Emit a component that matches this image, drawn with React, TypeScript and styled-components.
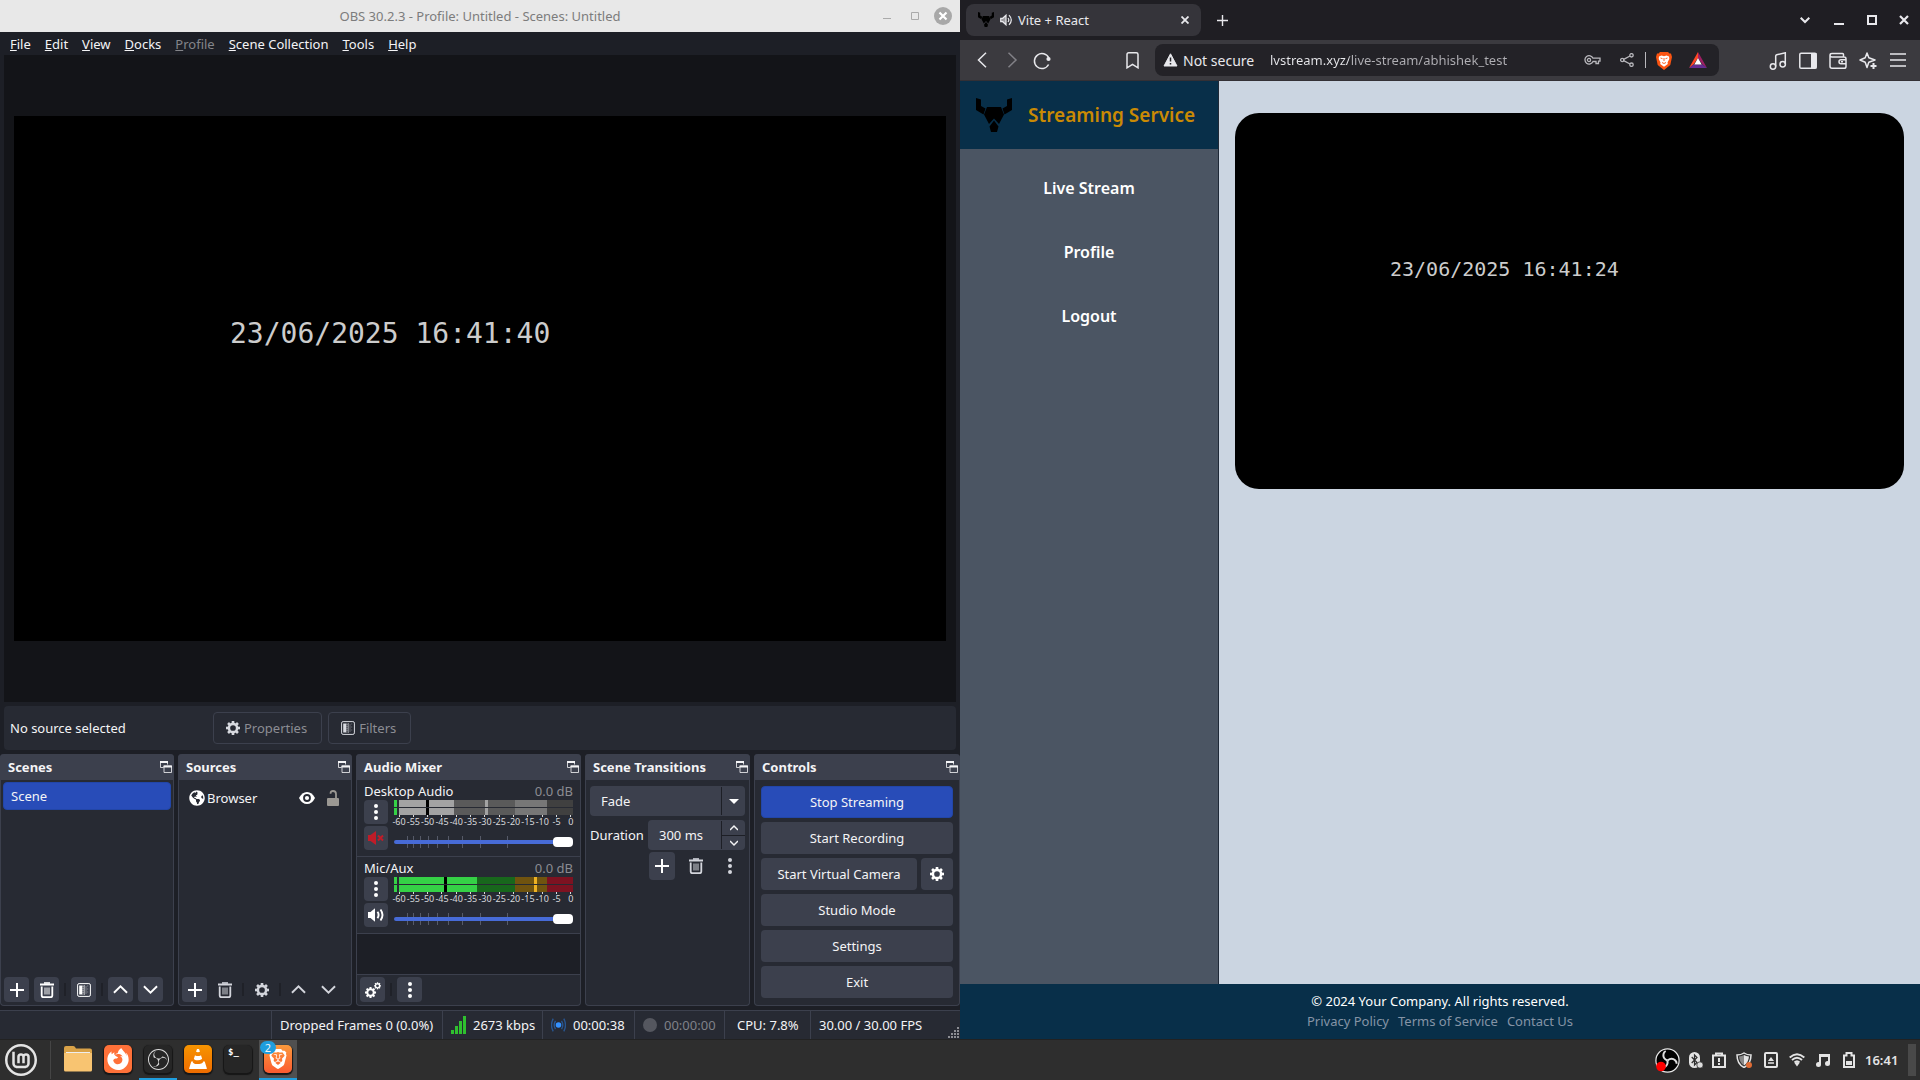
import React from 'react';
import styled, { createGlobalStyle, css } from 'styled-components';
import { SiBrave, SiFirefoxbrowser, SiLinuxmint, SiObsstudio, SiVlcmediaplayer } from 'react-icons/si';
import { FaGlobeAmericas } from 'react-icons/fa';

const ui = '"Noto Sans", "DejaVu Sans", sans-serif';
const mono = '"DejaVu Sans Mono", monospace';

const c = {
  base: '#1d1f26',
  panel: '#272a33',
  raised: '#3c404d',
  accent: '#284cb8',
  sea: '#082f49',
  text: '#f4f4f6',
};

const GlobalStyle = createGlobalStyle`
  *, *::before, *::after { box-sizing: border-box; }
  body { margin: 0; background: #1b1c20; font-family: ${ui}; font-size: 13px; color: ${c.text}; }
  button, input, select { font: inherit; color: inherit; border: 0; margin: 0; padding: 0; background: none; }
  button { cursor: pointer; }
  svg { display: block; flex: none; }
  ul, h1, h2, p { margin: 0; padding: 0; list-style: none; }
`;

const Desktop = styled.div`
  min-height: 100vh;
  display: grid;
  grid-template-columns: 1fr 1fr;
  grid-template-rows: 1fr 41px;
`;

/* ---------- OBS window ---------- */

const ObsWindow = styled.section`
  display: flex;
  flex-direction: column;
  background: ${c.base};
  min-width: 0;
`;

const TitleBar = styled.header`
  display: grid;
  grid-template-columns: 1fr auto 1fr;
  align-items: center;
  height: 32px;
  background: #e8e8e8;
  color: #7c7c7c;
`;

const WindowTitle = styled.h1`
  grid-column: 2;
  font-size: 13px;
  font-weight: 400;
`;

const TitleButtons = styled.div`
  display: flex;
  justify-content: flex-end;
  align-items: center;
  gap: 10px;
  padding-right: 8px;
`;

const TitleButton = styled.button`
  width: 18px;
  height: 18px;
`;

const MenuBar = styled.nav`
  display: flex;
  align-items: center;
  gap: 14px;
  height: 23px;
  padding: 0 10px;
`;

const MenuItem = styled.button`
  line-height: 18px;
  &:disabled { color: #84858a; }
  &::first-letter { text-decoration: underline; }
`;

const Preview = styled.div`
  flex: 1;
  display: flex;
  align-items: center;
  margin: 0 4px;
  padding: 0 10px;
  background: #131418;
`;

const PreviewCanvas = styled.div`
  flex: 1;
  aspect-ratio: 16 / 9;
  padding: 202px 0 0 216px;
  background: #000;
  color: #ccc;
  font: 28px/32px ${mono};
`;

const SourceBar = styled.div`
  display: flex;
  align-items: center;
  gap: 6px;
  height: 44px;
  margin: 4px;
  padding: 0 6px;
  background: ${c.panel};
  border-radius: 4px;
`;

const SourceName = styled.p`
  width: 197px;
`;

const OutlineButton = styled.button`
  display: flex;
  align-items: center;
  gap: 4px;
  height: 32px;
  padding: 0 14px 0 12px;
  border: 1px solid ${c.raised};
  border-radius: 4px;
  color: #8c8d93;
  svg { color: #d8dae0; }
`;

const Docks = styled.div`
  display: grid;
  grid-template-columns: 174fr 174fr 225fr 165fr 206fr;
  gap: 4px;
  height: 252px;
`;

const DockBox = styled.section`
  display: flex;
  flex-direction: column;
  min-width: 0;
  background: ${c.panel};
  border: 1px solid ${c.raised};
  border-top: 0;
  border-radius: 4px;
`;

const DockHead = styled.header`
  display: flex;
  justify-content: space-between;
  align-items: center;
  height: 26px;
  margin: 0 -1px;
  padding: 0 2px 0 8px;
  background: ${c.raised};
  border-radius: 4px 4px 0 0;
  h2 { font-size: 13px; font-weight: 700; }
`;

const DockBody = styled.div<{ $pad?: string }>`
  flex: 1;
  display: flex;
  flex-direction: column;
  padding: ${p => p.$pad ?? '0'};
`;

const DockTools = styled.div<{ $line?: boolean }>`
  display: flex;
  align-items: center;
  gap: 5px;
  padding: 2px 4px 3px 3px;
  ${p => p.$line && css`border-top: 1px solid ${c.raised};`}
`;

const ToolSep = styled.span`
  width: 2px;
  height: 13px;
  background: #1f2128;
`;

const IconButton = styled.button<{ $flat?: boolean; $size?: number; $tall?: number }>`
  display: grid;
  place-items: center;
  width: ${p => p.$size ?? 25}px;
  height: ${p => p.$tall ?? p.$size ?? 25}px;
  border-radius: 4px;
  background: ${p => (p.$flat ? 'transparent' : c.raised)};
  color: ${p => (p.$flat ? '#d3d5dc' : '#fff')};
`;

const SceneItem = styled.button`
  height: 28px;
  padding: 0 7px;
  text-align: left;
  background: ${c.accent};
  border: 1px solid #2246a8;
  border-radius: 4px;
`;

const SourceRow = styled.div`
  display: flex;
  align-items: center;
  gap: 2px;
  height: 34px;
  > span { flex: 1; }
`;

const RowIcons = styled.div`
  display: flex;
  align-items: center;
  gap: 12px;
`;

const Channel = styled.div`
  display: grid;
  grid-template-columns: 24px 1fr;
  grid-template-rows: 20px 1fr;
  column-gap: 6px;
  height: 77px;
  padding: 0 7px;
  border-bottom: 1px solid ${c.raised};
`;

const ChannelHead = styled.div`
  grid-column: 1 / 3;
  display: flex;
  justify-content: space-between;
  line-height: 22px;
  span:last-child { color: #8b8c92; }
`;

const ChannelButtons = styled.div`
  display: flex;
  flex-direction: column;
  gap: 2px;
`;

const MeterRows = styled.div`
  display: grid;
  gap: 1px;
`;

const MeterRow = styled.div`
  display: flex;
  height: 7px;
`;

const Segment = styled.i<{ $w: number; $color: string }>`
  flex: ${p => p.$w} 0 0;
  background: ${p => p.$color};
`;

const Scale = styled.div`
  display: flex;
  justify-content: space-between;
  height: 19px;
  padding: 0 2px 0 5px;
`;

const Mark = styled.span`
  display: flex;
  flex-direction: column;
  align-items: center;
  width: 0;
  font-size: 9px;
  line-height: 9px;
  color: #d8d9dc;
  white-space: nowrap;
  &::before { content: ''; flex: none; width: 1px; height: 2px; background: #d8d9dc; }
`;

const VolumeWrap = styled.div`
  display: grid;
  align-items: center;
  height: 16px;
  > * { grid-area: 1 / 1; }
  svg { width: 100%; }
`;

const Volume = styled.input`
  appearance: none;
  width: 100%;
  height: 4px;
  border-radius: 2px;
  background: #476bd7;
  &::-webkit-slider-thumb {
    appearance: none;
    width: 20px;
    height: 10px;
    border-radius: 4px;
    background: #fff;
  }
`;

const MixerEmpty = styled.div`
  flex: 1;
  background: ${c.base};
`;

const SelectWrap = styled.div`
  display: grid;
  align-items: center;
  height: 30px;
  border-radius: 4px;
  background: ${c.raised};
  > * { grid-area: 1 / 1; }
  select {
    appearance: none;
    width: 100%;
    height: 30px;
    padding: 0 11px;
    outline: 0;
  }
`;

const SelectArrow = styled.span`
  justify-self: end;
  display: grid;
  place-items: center;
  width: 24px;
  height: 28px;
  border-left: 1px solid ${c.base};
  pointer-events: none;
`;

const DurationRow = styled.div`
  display: flex;
  align-items: center;
  justify-content: space-between;
  margin: 4px 0 2px;
`;

const SpinBox = styled.div`
  display: flex;
  width: 97px;
  height: 30px;
  border-radius: 4px;
  background: ${c.raised};
  input { flex: 1; min-width: 0; padding-left: 11px; outline: 0; }
`;

const SpinButtons = styled.div`
  display: grid;
  grid-template-rows: 1fr 1fr;
  width: 24px;
  margin: 1px 0;
  border-left: 1px solid ${c.base};
  button { display: grid; place-items: center; }
  button + button { border-top: 1px solid ${c.base}; }
`;

const TransitionTools = styled.div`
  display: flex;
  justify-content: flex-end;
  gap: 8px;
  padding-right: 2px;
`;

const ControlGrid = styled.div`
  display: grid;
  grid-template-columns: 1fr 32px;
  gap: 4px;
`;

const ControlButton = styled.button<{ $wide?: boolean; $active?: boolean }>`
  height: 32px;
  border-radius: 4px;
  background: ${p => (p.$active ? c.accent : c.raised)};
  ${p => p.$active && css`border: 1px solid #2246a8;`}
  ${p => p.$wide && css`grid-column: 1 / 3;`}
`;

const StatusBar = styled.footer`
  display: flex;
  justify-content: flex-end;
  height: 29px;
  margin-top: 4px;
  background: ${c.panel};
  border-top: 1px solid ${c.raised};
`;

const StatusCell = styled.div<{ $w: number; $dim?: boolean; $pad?: number }>`
  display: flex;
  align-items: center;
  gap: 7px;
  width: ${p => p.$w}px;
  padding-left: ${p => p.$pad ?? 8}px;
  border-left: 1px solid ${c.raised};
  white-space: nowrap;
  color: ${p => (p.$dim ? '#7f8188' : c.text)};
`;

const Grip = styled.span`
  align-self: flex-end;
  margin-left: auto;
`;

/* ---------- Browser window ---------- */

const BrowserWindow = styled.section`
  display: flex;
  flex-direction: column;
  min-width: 0;
  background: #1f1e23;
  color: #e8e8ec;
`;

const TabStrip = styled.header`
  display: flex;
  align-items: center;
  height: 40px;
  padding-left: 6px;
`;

const Tab = styled.div`
  display: flex;
  align-items: center;
  gap: 6px;
  width: 235px;
  height: 32px;
  padding: 0 8px 0 12px;
  border-radius: 8px;
  background: #35343a;
  span { flex: 1; }
`;

const GhostButton = styled.button<{ $w?: number; $dim?: boolean }>`
  display: grid;
  place-items: center;
  width: ${p => p.$w ?? 30}px;
  height: 16px;
  color: ${p => (p.$dim ? '#828187' : '#e8e8ec')};
`;

const Spacer = styled.div<{ $w?: number }>`
  flex: ${p => (p.$w ? `0 0 ${p.$w}px` : '1')};
`;

const Toolbar = styled.div`
  display: flex;
  align-items: center;
  height: 41px;
  padding: 0 7px;
  background: #3b3a3f;
  border-bottom: 1px solid #333035;
`;

const AddressBar = styled.div`
  flex: 1;
  display: flex;
  align-items: center;
  height: 32px;
  margin: 0 44px 0 8px;
  padding: 0 5px 0 8px;
  border-radius: 8px;
  background: #232227;
`;

const SecurityLabel = styled.label`
  display: flex;
  align-items: center;
  gap: 5px;
  width: 107px;
  font-size: 14px;
`;

const Address = styled.input`
  flex: 1;
  min-width: 0;
  outline: 0;
  color: transparent;
  background: linear-gradient(to right, #e8e8ec 79px, #b0afb4 79px);
  background-clip: text;
  -webkit-background-clip: text;
`;

const AddressSep = styled.span`
  width: 1px;
  height: 16px;
  background: #b9b8bd;
`;

const Page = styled.div`
  flex: 1;
  display: grid;
  grid-template-columns: 259px 1fr;
  grid-template-rows: 1fr auto;
  background: #cbd5e1;
`;

const Sidebar = styled.aside`
  background: #4b5563;
  border-right: 1px solid #1f2937;
`;

const Brand = styled.div`
  display: flex;
  align-items: center;
  gap: 16px;
  height: 68px;
  padding: 0 16px;
  background: ${c.sea};
  color: #ca8a04;
  font-size: 19px;
  font-weight: 600;
  white-space: nowrap;
`;

const SideNav = styled.nav`
  display: flex;
  flex-direction: column;
  align-items: center;
  gap: 40px;
  padding-top: 27px;
`;

const SideLink = styled.a`
  color: #fff;
  font-size: 16px;
  font-weight: 600;
  line-height: 24px;
  text-decoration: none;
`;

const Main = styled.main`
  padding: 32px 16px;
`;

const Video = styled.div`
  aspect-ratio: 16 / 9;
  padding: 144px 0 0 155px;
  border-radius: 24px;
  background: #000;
  color: #ccc;
  font: 20px/24px ${mono};
`;

const PageFooter = styled.footer`
  grid-column: 1 / 3;
  padding: 7px 0 8px;
  background: ${c.sea};
  color: #fff;
  line-height: 20px;
  text-align: center;
`;

const FooterLinks = styled.div`
  display: flex;
  justify-content: center;
  gap: 9px;
  a { color: #8594a6; text-decoration: none; }
`;

/* ---------- Task bar ---------- */

const TaskBar = styled.footer`
  grid-column: 1 / 3;
  display: flex;
  align-items: center;
  background: #2e2e2e;
  border-top: 1px solid #222;
  padding: 0 4px 0 5px;
`;

const TaskSep = styled.span`
  width: 1px;
  height: 38px;
  margin: 0 8px 0 13px;
  background: #454545;
`;

const TaskItems = styled.div`
  display: flex;
  gap: 2px;
`;

const TaskButton = styled.button<{ $open?: boolean; $focus?: boolean }>`
  position: relative;
  display: grid;
  place-items: center;
  width: 38px;
  height: 40px;
  padding-bottom: 2px;
  background: ${p => (p.$focus ? '#505050' : 'transparent')};
  ${p => p.$open && css`box-shadow: inset 0 -2px #1f9ede;`}
`;

const AppTile = styled.span<{ $bg: string }>`
  display: grid;
  place-items: center;
  width: 28px;
  height: 28px;
  border-radius: 5px;
  background: ${p => p.$bg};
  color: #fff;
  box-shadow: 0 1px 1px 1px #161616;
`;

const TermPrompt = styled.span`
  align-self: start;
  justify-self: start;
  padding: 1px 4px;
  font: 700 9px/12px ${mono};
`;

const Badge = styled.span`
  position: absolute;
  top: 1px;
  left: 1px;
  width: 16px;
  height: 13px;
  border-radius: 7px;
  background: #1f9ede;
  font-size: 11px;
  line-height: 13px;
  text-align: center;
`;

const Tray = styled.div`
  display: flex;
  align-items: center;
  margin-left: auto;
`;

const TrayButton = styled.button<{ $w: number }>`
  display: grid;
  place-items: center;
  width: ${p => p.$w}px;
  height: 32px;
  color: #e4e4e4;
`;

const Clock = styled.time`
  width: 46px;
  padding-left: 3px;
  font-size: 13px;
  font-weight: 600;
  color: #e4e4e4;
`;

const ShowDesktop = styled.button`
  width: 8px;
  height: 32px;
  background: #494949;
`;

/* ---------- Icons ---------- */

type IconProps = { size?: number; children?: React.ReactNode; box?: string; sw?: number };
const Line = ({ size = 16, box = '0 0 16 16', sw = 1.5, children }: IconProps) => (
  <svg width={size} height={size} viewBox={box} fill="none" stroke="currentColor" strokeWidth={sw} aria-hidden="true">{children}</svg>
);

const Plus = () => <Line sw={2}><path d="M8 1v14M1 8h14" /></Line>;
const Trash = () => (
  <Line sw={1}>
    <path d="M1 2.5h14" strokeWidth="2" />
    <path d="M5 1h6" strokeWidth="1.6" />
    <path d="M2.7 4.5v9q0 1.7 1.7 1.7h7.2q1.7 0 1.7-1.7v-9" strokeWidth="1.8" />
    <path d="M6 5.5v7M8 5.5v7M10 5.5v7" />
  </Line>
);
const Up = () => <Line size={15} sw={2}><path d="M1 11.5 8 4.5l7 7" /></Line>;
const Down = () => <Line size={15} sw={2}><path d="M1 4.5l7 7 7-7" /></Line>;
const Dots = () => (
  <svg width="4" height="16" viewBox="0 0 4 16" fill="currentColor" aria-hidden="true">
    <circle cx="2" cy="2" r="2" /><circle cx="2" cy="8" r="2" /><circle cx="2" cy="14" r="2" />
  </svg>
);
const teeth = [0, 45, 90, 135, 180, 225, 270, 315];
const GearShape = () => (
  <>
    <circle cx="8" cy="8" r="4.7" strokeWidth="2.9" />
    {teeth.map(a => <path key={a} d="M8 3V0" strokeWidth="3" transform={`rotate(${a} 8 8)`} />)}
  </>
);
const Gear = ({ size = 14 }) => <Line size={size}><GearShape /></Line>;
const Gears = () => (
  <Line>
    <g transform="translate(0 5) scale(.69)"><GearShape /></g>
    <g transform="translate(9 .3) scale(.44)"><GearShape /></g>
  </Line>
);
const FilterIcon = () => (
  <Line size={14} box="0 0 14 14" sw={1}>
    <rect x=".6" y=".6" width="12.8" height="12.8" rx="1.5" />
    <path d="M2.2 2.5h3v9h-3z" fill="currentColor" stroke="none" />
    <path d="M6 2.5v9" strokeDasharray="1.4 .6" />
    <path d="M7.5 2.5v9" strokeDasharray="1 1" />
    <path d="M9 3.5v8" strokeDasharray="1 1" opacity=".7" />
    <path d="M10.7 2.5v9" strokeDasharray="1 2" opacity=".4" />
  </Line>
);
const PopOut = () => (
  <Line size={12} box="0 0 12 12" sw={1}>
    <path d="M3.500 6.500h-3v-6h7v3" opacity=".8" /><path d="M0 1h8" strokeWidth="2" />
    <path d="M4 5h7.500v6.500H4z" fill={c.raised} strokeOpacity=".8" /><path d="M3.500 5.500H12" strokeWidth="2" />
  </Line>
);
const Eye = () => (
  <svg width="16" height="12" viewBox="0 0 16 12" aria-hidden="true">
    <path d="M0 6Q3 0 8 0t8 6q-3 6-8 6T0 6Z" fill="#fff" /><circle cx="8" cy="6" r="3.9" fill={c.panel} />
    <circle cx="8" cy="6" r="2.1" fill="#fff" />
  </svg>
);
const Unlocked = () => (
  <svg width="12" height="16" viewBox="0 0 12 16" aria-hidden="true">
    <rect y="8" width="12" height="8" rx="1" fill="#9b9893" />
    <path d="M3.6 3.8V3q0-2 2.4-2 3 0 3 3v4" fill="none" stroke="#9b9893" strokeWidth="1.8" />
  </svg>
);
const Muted = () => (
  <svg width="16" height="14" viewBox="0 0 16 14" aria-hidden="true">
    <path d="M0 4h2.5L8 0v14l-5.5-4H0Z" fill="#c01c28" /><path d="m10 4.5 5 5m0-5-5 5" stroke="#c01c28" strokeWidth="2" />
  </svg>
);
const Speaker = () => (
  <Line box="0 0 16 16">
    <path d="M0 5h2.5L7 1.2v13.600L2.5 11H0Z" fill="currentColor" stroke="none" />
    <path d="M9.5 4.8q2.2 3.2 0 6.4M12.5 2.5q4 5.5 0 11" strokeWidth="1.9" />
  </Line>
);
const BullHead = ({ size = 36 }) => (
  <svg width={size} height={size * 34 / 36} viewBox="0 0 36 34" fill="#000" aria-hidden="true">
    <path d="M0 0l5 1.5V8l4.500 2.500-2 6L0 12Z" /><path d="M36 0l-5 1.5V8l-4.500 2.500 2 6L36 12Z" />
    <path d="M11 9h14l3 7.500-5 9.500-5-5.500-5 5.500-5-9.500Z" /><path d="M18 22.5l4.5 6L21 34h-6l-1.5-5.500Z" />
  </svg>
);

/* ---------- Parts ---------- */

const Dock = ({ title, children }: { title: string; children: React.ReactNode }) => (
  <DockBox>
    <DockHead><h2>{title}</h2><button aria-label={`Float ${title}`}><PopOut /></button></DockHead>
    {children}
  </DockBox>
);

type Seg = [number, string];
const desktopMeter: Seg[] = [[3, '#35d146'], [2, c.panel], [27, '#a3a3a3'], [3, '#000'], [25, '#a3a3a3'], [31, '#5a5a5a'], [3, '#a3a3a3'], [27, '#5a5a5a'], [32, '#777'], [26, '#404040']];
const micMeter: Seg[] = [[3, '#35d146'], [2, c.panel], [45, '#35d146'], [3, '#000'], [30, '#35d146'], [38, '#18671c'], [19, '#70530f'], [3, '#edb224'], [10, '#70530f'], [26, '#7d1221']];
const marks = ['-60', '-55', '-50', '-45', '-40', '-35', '-30', '-25', '-20', '-15', '-10', '-5', '0'];
const volumeTicks = [13, 19, 26, 34, 43, 54, 68, 86, 113];

const MixerChannel = ({ name, segs, muted }: { name: string; segs: Seg[]; muted?: boolean }) => (
  <Channel>
    <ChannelHead><span>{name}</span><span>0.0 dB</span></ChannelHead>
    <ChannelButtons>
      <IconButton $size={24} aria-label={`${name} options`}><Dots /></IconButton>
      <IconButton $size={24} aria-label={`${name} mute`}>{muted ? <Muted /> : <Speaker />}</IconButton>
    </ChannelButtons>
    <div>
      <MeterRows>
        {[0, 1].map(r => <MeterRow key={r}>{segs.map(([w, col], i) => <Segment key={i} $w={w} $color={col} />)}</MeterRow>)}
      </MeterRows>
      <Scale>{marks.map(m => <Mark key={m}>{m}</Mark>)}</Scale>
      <VolumeWrap>
        <svg height="12" viewBox="0 0 179 12" preserveAspectRatio="none" aria-hidden="true">
          {volumeTicks.map(x => <path key={x} d={`M${x}.5 0v12`} stroke="#565a68" />)}
        </svg>
        <Volume type="range" min={0} max={100} defaultValue={100} aria-label={`${name} volume`} />
      </VolumeWrap>
    </div>
  </Channel>
);

const Obs = () => (
  <ObsWindow>
    <TitleBar>
      <WindowTitle>OBS 30.2.3 - Profile: Untitled - Scenes: Untitled</WindowTitle>
      <TitleButtons>
        <TitleButton aria-label="Minimize"><Line size={18} box="0 0 18 18" sw={1}><path d="M5 11.5h8" stroke="#aaa" /></Line></TitleButton>
        <TitleButton aria-label="Maximize"><Line size={18} box="0 0 18 18" sw={1}><path d="M5.5 5.5h7v7h-7z" stroke="#aaa" /></Line></TitleButton>
        <TitleButton aria-label="Close"><Line size={18} box="0 0 18 18" sw={2.2}><circle cx="9" cy="9" r="9" fill="#a8a8a8" stroke="none" /><path d="M5.5 5.5l7 7m0-7-7 7" stroke="#fff" /></Line></TitleButton>
      </TitleButtons>
    </TitleBar>
    <MenuBar>
      {['File', 'Edit', 'View', 'Docks', 'Profile', 'Scene Collection', 'Tools', 'Help'].map(m => (
        <MenuItem key={m} disabled={m === 'Profile'}>{m}</MenuItem>
      ))}
    </MenuBar>
    <Preview><PreviewCanvas>23/06/2025 16:41:40</PreviewCanvas></Preview>
    <SourceBar>
      <SourceName>No source selected</SourceName>
      <OutlineButton><Gear /> Properties</OutlineButton>
      <OutlineButton><FilterIcon /> Filters</OutlineButton>
    </SourceBar>
    <Docks>
      <Dock title="Scenes">
        <DockBody $pad="2px 2px 0"><SceneItem>Scene</SceneItem></DockBody>
        <DockTools>
          <IconButton aria-label="Add scene"><Plus /></IconButton>
          <IconButton aria-label="Remove scene"><Trash /></IconButton>
          <ToolSep />
          <IconButton aria-label="Scene filters"><FilterIcon /></IconButton>
          <ToolSep />
          <IconButton aria-label="Move scene up"><Up /></IconButton>
          <IconButton aria-label="Move scene down"><Down /></IconButton>
        </DockTools>
      </Dock>
      <Dock title="Sources">
        <DockBody $pad="1px 12px 0 10px">
          <SourceRow>
            <FaGlobeAmericas size={16} color="#fff" />
            <span>Browser</span>
            <RowIcons>
              <button aria-label="Visibility"><Eye /></button>
              <button aria-label="Lock"><Unlocked /></button>
            </RowIcons>
          </SourceRow>
        </DockBody>
        <DockTools>
          <IconButton aria-label="Add source"><Plus /></IconButton>
          <IconButton $flat aria-label="Remove source"><Trash /></IconButton>
          <ToolSep />
          <IconButton $flat aria-label="Source properties"><Gear /></IconButton>
          <ToolSep />
          <IconButton $flat aria-label="Move source up"><Up /></IconButton>
          <IconButton $flat aria-label="Move source down"><Down /></IconButton>
        </DockTools>
      </Dock>
      <Dock title="Audio Mixer">
        <DockBody>
          <MixerChannel name="Desktop Audio" segs={desktopMeter} muted />
          <MixerChannel name="Mic/Aux" segs={micMeter} />
          <MixerEmpty />
        </DockBody>
        <DockTools $line>
          <IconButton aria-label="Advanced audio"><Gears /></IconButton>
          <ToolSep />
          <IconButton aria-label="Mixer menu"><Dots /></IconButton>
        </DockTools>
      </Dock>
      <Dock title="Scene Transitions">
        <DockBody $pad="6px 4px">
          <SelectWrap>
            <select aria-label="Transition"><option>Fade</option></select>
            <SelectArrow><svg width="10" height="5" viewBox="0 0 10 5" fill="#fff"><path d="M0 0h10L5 5Z" /></svg></SelectArrow>
          </SelectWrap>
          <DurationRow>
            <label htmlFor="duration">Duration</label>
            <SpinBox>
              <input id="duration" defaultValue="300 ms" />
              <SpinButtons>
                <button aria-label="Increase"><Line size={8} box="0 0 8 8"><path d="M0 6l4-4 4 4" /></Line></button>
                <button aria-label="Decrease"><Line size={8} box="0 0 8 8"><path d="M0 2l4 4 4-4" /></Line></button>
              </SpinButtons>
            </SpinBox>
          </DurationRow>
          <TransitionTools>
            <IconButton $size={26} $tall={28} aria-label="Add transition"><Plus /></IconButton>
            <IconButton $size={26} $tall={28} $flat aria-label="Remove transition"><Trash /></IconButton>
            <IconButton $size={26} $tall={28} $flat aria-label="Transition menu"><Dots /></IconButton>
          </TransitionTools>
        </DockBody>
      </Dock>
      <Dock title="Controls">
        <DockBody $pad="6px">
          <ControlGrid>
            <ControlButton $wide $active>Stop Streaming</ControlButton>
            <ControlButton $wide>Start Recording</ControlButton>
            <ControlButton>Start Virtual Camera</ControlButton>
            <IconButton $size={32} aria-label="Virtual camera settings"><Gear /></IconButton>
            <ControlButton $wide>Studio Mode</ControlButton>
            <ControlButton $wide>Settings</ControlButton>
            <ControlButton $wide>Exit</ControlButton>
          </ControlGrid>
        </DockBody>
      </Dock>
    </Docks>
    <StatusBar>
      <StatusCell $w={171}>Dropped Frames 0 (0.0%)</StatusCell>
      <StatusCell $w={100}>
        <svg width="15" height="18" viewBox="0 0 15 18" fill="#2fc02f"><path d="M0 14h3v4H0zM4 10h3v8H4zM8 5h3v13H8zM12 0h3v18h-3z" /></svg>
        2673 kbps
      </StatusCell>
      <StatusCell $w={92}>
        <svg width="15" height="14" viewBox="0 0 15 14" fill="none" stroke="#28558f" strokeWidth="1.4">
          <circle cx="7.5" cy="7" r="2.8" fill="#3391ff" stroke="none" />
          <path d="M4.5 2.8q-2.6 4.2 0 8.4M10.5 2.8q2.6 4.2 0 8.4M2.2.6q-3.4 6.4 0 12.8M12.8.6q3.4 6.4 0 12.8" />
        </svg>
        00:00:38
      </StatusCell>
      <StatusCell $w={90} $dim>
        <svg width="14" height="14" viewBox="0 0 14 14"><circle cx="7" cy="7" r="7" fill="#55575f" /></svg>
        00:00:00
      </StatusCell>
      <StatusCell $w={86} $pad={12}>CPU: 7.8%</StatusCell>
      <StatusCell $w={150}>
        30.00 / 30.00 FPS
        <Grip>
          <svg width="12" height="12" viewBox="0 0 12 12" fill="#8c8d93">
            <path d="M9 0h2v2H9zM6 3h2v2H6zM9 3h2v2H9zM3 6h2v2H3zM6 6h2v2H6zM9 6h2v2H9zM0 9h2v2H0zM3 9h2v2H3zM6 9h2v2H6zM9 9h2v2H9z" />
          </svg>
        </Grip>
      </StatusCell>
    </StatusBar>
  </ObsWindow>
);

const Browser = () => (
  <BrowserWindow>
    <TabStrip>
      <Tab>
        <BullHead size={16} />
        <Line size={12} box="0 0 12 12" sw={1.2}>
          <path d="M.7 4.3h2L6 1.2v9.6L2.7 7.7h-2Z" fill="#9a999e" /><path d="M8 4q1.6 2 0 4M9 1.2q4.6 4.8 0 9.6" />
        </Line>
        <span>Vite + React</span>
        <GhostButton $w={16} aria-label="Close tab"><Line size={8} box="0 0 8 8" sw={1.8}><path d="M.5.5l7 7m0-7-7 7" /></Line></GhostButton>
      </Tab>
      <GhostButton $w={42} aria-label="New tab"><Line size={11} box="0 0 11 11" sw={1.4}><path d="M5.5 0v11M0 5.5h11" /></Line></GhostButton>
      <Spacer />
      <GhostButton $w={34} aria-label="Search tabs"><Line size={10} box="0 0 10 10" sw={2}><path d="M.7 2.7 5 7l4.3-4.3" /></Line></GhostButton>
      <GhostButton $w={34} aria-label="Minimize"><Line size={10} box="0 0 10 10" sw={2}><path d="M0 9h10" /></Line></GhostButton>
      <GhostButton $w={32} aria-label="Maximize"><Line size={10} box="0 0 10 10" sw={2}><path d="M1 1h8v8H1z" /></Line></GhostButton>
      <GhostButton $w={32} aria-label="Close"><Line size={10} box="0 0 10 10" sw={2.2}><path d="M1 1l8 8m0-8-8 8" /></Line></GhostButton>
    </TabStrip>
    <Toolbar>
      <GhostButton aria-label="Back"><Line><path d="M12 .8 4.5 8l7.5 7.2" /></Line></GhostButton>
      <GhostButton $dim aria-label="Forward"><Line><path d="M4.5.8 12 8l-7.5 7.2" /></Line></GhostButton>
      <GhostButton aria-label="Reload">
        <Line size={18} box="0 0 18 18"><path d="M15.6 12.5A7.5 7.5 0 1 1 15.8 6" /><circle cx="15.5" cy="7" r="2.1" fill="currentColor" stroke="none" /></Line>
      </GhostButton>
      <Spacer $w={60} />
      <GhostButton aria-label="Bookmark"><Line size={17} box="0 0 16 17"><path d="M2.5 2.5q0-1.7 1.7-1.7h7.6q1.7 0 1.7 1.7v13.3L8 12.3l-5.5 3.5Z" /></Line></GhostButton>
      <AddressBar>
        <SecurityLabel htmlFor="address">
          <svg width="15" height="14" viewBox="0 0 15 14"><path d="M7.5.8 14 13H1Z" fill="#e8e8ec" stroke="#e8e8ec" strokeLinejoin="round" /><path d="M7.5 4.5v4M7.5 10v1.5" stroke="#232227" strokeWidth="1.5" /></svg>
          Not secure
        </SecurityLabel>
        <Address id="address" defaultValue="lvstream.xyz/live-stream/abhishek_test" />
        <GhostButton $w={34} aria-label="Passwords">
          <svg width="17" height="12" viewBox="0 0 17 12" fill="none" stroke="#b9b8bd" strokeWidth="1.3">
            <path d="M9 4.2h7v3h-1.5V9.5h-2.5V7.5H9A4.2 4.2 0 1 1 9 4.2Z" /><circle cx="5" cy="6" r="1.6" />
          </svg>
        </GhostButton>
        <GhostButton $w={36} aria-label="Share">
          <svg width="14" height="14" viewBox="0 0 14 14" fill="none" stroke="#b9b8bd" strokeWidth="1.3">
            <circle cx="2.2" cy="7" r="1.6" /><circle cx="11.5" cy="2.3" r="1.7" /><circle cx="11.5" cy="11.7" r="1.7" /><path d="M3.7 6.3 10 3M3.7 7.7 10 11" />
          </svg>
        </GhostButton>
        <AddressSep />
        <GhostButton $w={36} aria-label="Brave Shields">
          <svg width="16" height="18" viewBox="0 0 16 18">
            <path d="M4 0h8l1.5 1.5L15 1.6 16 5l-1.7 8L8 18 1.7 13 0 5l1-3.4 1.5-.1Z" fill="#fb5411" />
            <path d="M3 4.5 5.5 3.5l2.5.7 2.5-.7L13 4.5l.3 2.5-1.8 3.5.3 1.5L8 14.8 4.2 12l.3-1.5L2.7 7Z" fill="#fff" />
            <path d="M4.5 6l2 .7M11.5 6l-2 .7M8 6v3M6 10.5l2 1 2-1" stroke="#fb5411" strokeWidth=".9" fill="none" />
          </svg>
        </GhostButton>
        <GhostButton $w={32} aria-label="Rewards">
          <svg width="18" height="16" viewBox="0 0 18 16">
            <path d="M9 0 0 16l4.5-3.5L9 6Z" fill="#ff4724" /><path d="M9 0l9 16-4.500-3.500L9 6Z" fill="#9e1f63" /><path d="M0 16h18l-4.500-3.500h-9Z" fill="#662d91" /><path d="M9 6 12.7 12.500H5.300Z" fill="#fff" />
          </svg>
        </GhostButton>
      </AddressBar>
      <GhostButton aria-label="Media"><Line size={18} box="0 0 18 18"><circle cx="4" cy="14.5" r="2.7" /><circle cx="13.7" cy="12.3" r="2.7" /><path d="M6.7 14.5V4q0-1 1-1.3l8.6-1.9V12" /></Line></GhostButton>
      <GhostButton aria-label="Side panel"><Line size={18} box="0 0 18 18"><rect x=".8" y="1.3" width="16.4" height="15" rx="1.3" /><path d="M12 1h5.5v15.5H12z" fill="currentColor" stroke="none" /></Line></GhostButton>
      <GhostButton aria-label="Wallet"><Line size={18} box="0 0 18 18"><path d="M14.5 4.5V2.5q0-1-1-1H3q-2 0-2 1.7T3 5h12q2 0 2 2v7.5q0 1.8-1.8 1.8H3q-2 0-2-2V3.5" /><path d="M17 7.8h-5q-2 0-2 2t2 2h5M12 9.8h2" /></Line></GhostButton>
      <GhostButton aria-label="Leo"><Line size={18} box="0 0 18 18"><path d="M8 1q1 2.5 1.8 4.7L16 8l-6.2 2.3L8 15.5 6.2 10.3 1 8l5.2-2.3Z" strokeLinejoin="round" /><path d="M14.5 11v6M11.5 14h6" strokeWidth="2" /></Line></GhostButton>
      <GhostButton aria-label="Menu"><Line size={16}><path d="M0 2h16M0 8h16M0 14h16" /></Line></GhostButton>
    </Toolbar>
    <Page>
      <Sidebar>
        <Brand><BullHead />Streaming Service</Brand>
        <SideNav>
          {['Live Stream', 'Profile', 'Logout'].map(t => <SideLink key={t} href="#">{t}</SideLink>)}
        </SideNav>
      </Sidebar>
      <Main><Video>23/06/2025 16:41:24</Video></Main>
      <PageFooter>
        <p>© 2024 Your Company. All rights reserved.</p>
        <FooterLinks><a href="#">Privacy Policy</a><a href="#">Terms of Service</a><a href="#">Contact Us</a></FooterLinks>
      </PageFooter>
    </Page>
  </BrowserWindow>
);

const Tasks = () => (
  <TaskBar>
    <button aria-label="Menu"><SiLinuxmint size={32} color="#e4e4e4" /></button>
    <TaskSep />
    <TaskItems>
      <TaskButton aria-label="Files">
        <svg width="28" height="26" viewBox="0 0 28 26">
          <path d="M0 2q0-2 2-2h7q1.5 0 2 1l1 1.5h14q2 0 2 2V14H0Z" fill="#d9a248" /><path d="M2 6h24v6H2z" fill="#eee" />
          <path d="M0 7h28v17q0 1.5-1.5 1.5h-25Q0 25.5 0 24Z" fill="#f8c471" />
        </svg>
      </TaskButton>
      <TaskButton aria-label="Firefox"><AppTile $bg="#ff7139"><SiFirefoxbrowser size={22} /></AppTile></TaskButton>
      <TaskButton $open aria-label="OBS Studio"><AppTile $bg="#262626"><SiObsstudio size={21} color="#ddd" /></AppTile></TaskButton>
      <TaskButton aria-label="VLC"><AppTile $bg="linear-gradient(#f79400, #ef6c00)"><SiVlcmediaplayer size={20} /></AppTile></TaskButton>
      <TaskButton aria-label="Terminal"><AppTile $bg="#262626"><TermPrompt>$_</TermPrompt></AppTile></TaskButton>
      <TaskButton $open $focus aria-label="Brave"><AppTile $bg="linear-gradient(#fb9a3c, #fb5a30)"><SiBrave size={20} /></AppTile><Badge>2</Badge></TaskButton>
    </TaskItems>
    <Tray>
      <TrayButton $w={30} aria-label="OBS Studio">
        <svg width="25" height="25" viewBox="0 0 25 25">
          <circle cx="12.5" cy="12.5" r="11.6" fill="#000" stroke="#e8e8e8" strokeWidth="1.2" />
          {[0, 120, 240].map(a => <path key={a} d="M12.5 12.5q-5-2-4-6.5.4-2 2.2-3" stroke="#ddd" strokeWidth="2" fill="none" transform={`rotate(${a} 12.5 12.5)`} />)}
          <circle cx="6" cy="18.5" r="4.8" fill="#f00" />
        </svg>
      </TrayButton>
      <TrayButton $w={27} aria-label="Bluetooth">
        <svg width="14" height="16" viewBox="0 0 14 16"><rect width="11" height="16" rx="5.5" fill="currentColor" /><path d="M2.7 5l5.3 5.5L5.5 13V3L8 5.5 2.7 11" fill="none" stroke="#2e2e2e" strokeWidth="1.2" /><circle cx="11" cy="13" r="3.2" fill="#ddd" stroke="#2e2e2e" strokeWidth=".8" /></svg>
      </TrayButton>
      <TrayButton $w={20} aria-label="Clipboard"><Line box="0 0 16 16" sw={2}><path d="M2 3.5h12V15H2z" /><path d="M5 3.5V1.5h6v2M8 6v4M8 11v2" /></Line></TrayButton>
      <TrayButton $w={29} aria-label="Updates">
        <svg width="16" height="16" viewBox="0 0 16 16"><path d="M8 1q3 2 7 2 0 9-7 12.5Q1 12 1 3q4 0 7-2Z" fill="none" stroke="currentColor" strokeWidth="1.5" /><path d="M8 3v10.5Q3.5 10.5 3 4.5 6 4 8 3Z" fill="#888" /><path d="M8 3v10.5q4.5-3 5-9Q10 4 8 3Z" fill="currentColor" /><circle cx="13" cy="13" r="3" fill="#e06c35" /></svg>
      </TrayButton>
      <TrayButton $w={25} aria-label="Removable drives"><Line sw={2}><rect x="2" y="1" width="12" height="14" rx="1" /><path d="M5 9l3-4 3 4Z" fill="currentColor" stroke="none" /><path d="M5 11h6" strokeWidth="1.5" /></Line></TrayButton>
      <TrayButton $w={27} aria-label="Wi-Fi"><Line><path d="M.7 5.5Q8-1 15.3 5.5M3 8q5-4.5 10 0M5.5 10.5Q8 8 10.5 10.5" strokeWidth="1.9" /><path d="M5.5 11Q8 9 10.5 11L8 14.5Z" fill="currentColor" stroke="none" /></Line></TrayButton>
      <TrayButton $w={25} aria-label="Sound"><Line sw={2}><path d="M5 12.5V3h9v8.5" /><path d="M5 3.5h9" strokeWidth="3" /><circle cx="3.5" cy="12.5" r="2.5" fill="currentColor" stroke="none" /><circle cx="12.5" cy="11.5" r="2.5" fill="currentColor" stroke="none" /></Line></TrayButton>
      <TrayButton $w={27} aria-label="Battery"><Line sw={2}><path d="M3 3.5h2.5V1h5v2.5H13V15H3z" /><path d="M5 9h6v4H5z" fill="currentColor" stroke="none" /></Line></TrayButton>
      <Clock>16:41</Clock>
      <ShowDesktop aria-label="Show desktop" />
    </Tray>
  </TaskBar>
);

export default function App() {
  return (
    <>
      <GlobalStyle />
      <Desktop>
        <Obs />
        <Browser />
        <Tasks />
      </Desktop>
    </>
  );
}
